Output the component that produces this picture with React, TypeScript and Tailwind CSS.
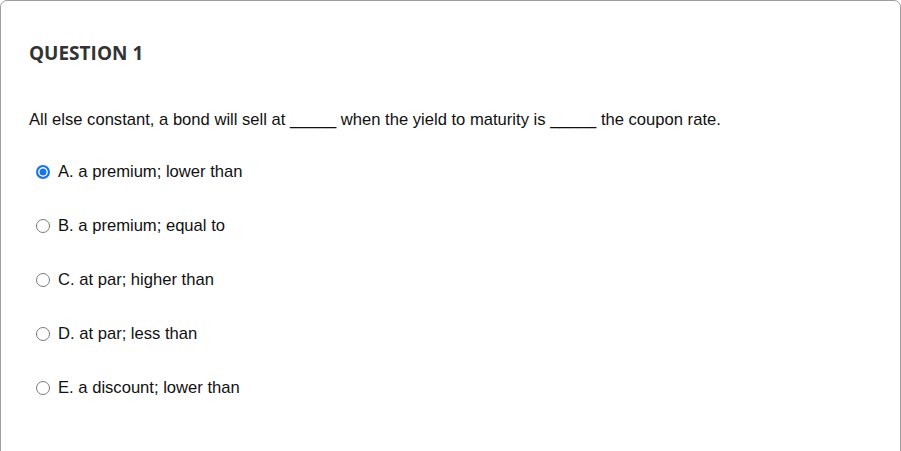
import React, { useState } from 'react';

const options = [
  { key: 'A', text: 'a premium; lower than' },
  { key: 'B', text: 'a premium; equal to' },
  { key: 'C', text: 'at par; higher than' },
  { key: 'D', text: 'at par; less than' },
  { key: 'E', text: 'a discount; lower than' },
];

export default function App() {
  const [selected, setSelected] = useState('A');

  return (
    <div className="w-[901px] h-[451px] bg-white overflow-hidden">
      <div className="h-[470px] border border-[#9e9e9e] rounded-t-[7px] pl-[28px] pt-[38px]">
        <h2 className="font-['Open_Sans',sans-serif] font-bold text-[19px] leading-[28px] text-[#333333]">
          QUESTION 1
        </h2>
        <p className="mt-[42.5px] font-['Liberation_Sans',Arial,sans-serif] text-[16.6px] leading-[20px] text-[#111]">
          All else constant, a bond will sell at _____ when the yield to maturity is _____ the coupon rate.
        </p>
        <div className="mt-[32.5px] flex flex-col gap-[34px] font-['Liberation_Sans',Arial,sans-serif] text-[16.6px] leading-[20px] text-[#111]">
          {options.map((o) => (
            <label key={o.key} className="flex items-center gap-[8px] cursor-pointer pl-[6.5px]">
              <input
                type="radio"
                name="q1"
                checked={selected === o.key}
                onChange={() => setSelected(o.key)}
                className="appearance-none m-0 shrink-0 w-[14.5px] h-[14.5px] rounded-full border-[1.5px] border-[#7a7a7a] bg-white checked:border-2 checked:border-[#1a73e8] checked:bg-[#1a73e8] checked:shadow-[inset_0_0_0_1.5px_#ffffff]"
              />
              <span>
                {o.key}. {o.text}
              </span>
            </label>
          ))}
        </div>
      </div>
    </div>
  );
}
